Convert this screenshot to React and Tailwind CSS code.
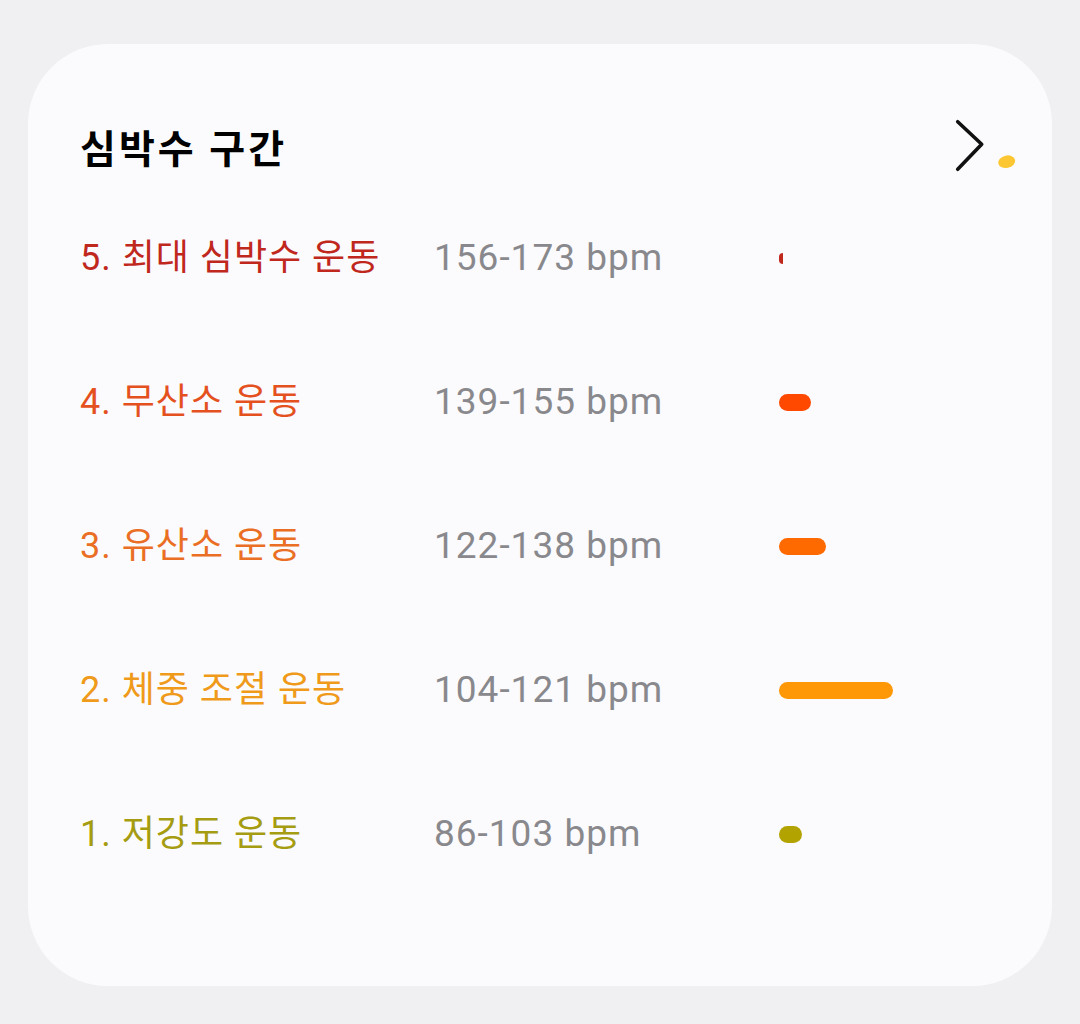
import React from 'react';

const zones = [
  { label: '5. 최대 심박수 운동', range: '156-173 bpm', color: 'text-[#c0281d]', bar: 'bg-[#c0281d]', w: 'w-[4px] h-[11px] rounded-l-full' },
  { label: '4. 무산소 운동', range: '139-155 bpm', color: 'text-[#e4511f]', bar: 'bg-[#ff4800]', w: 'w-[32px] h-[17px] rounded-full' },
  { label: '3. 유산소 운동', range: '122-138 bpm', color: 'text-[#ea6f24]', bar: 'bg-[#ff6a00]', w: 'w-[47px] h-[17px] rounded-full' },
  { label: '2. 체중 조절 운동', range: '104-121 bpm', color: 'text-[#ef9a1a]', bar: 'bg-[#ff9806]', w: 'w-[114px] h-[17px] rounded-full' },
  { label: '1. 저강도 운동', range: '86-103 bpm', color: 'text-[#a59c12]', bar: 'bg-[#b3a300]', w: 'w-[23px] h-[17px] rounded-full' },
];

export default function App() {
  return (
    <div
      className="min-h-[1024px] w-[1080px] bg-[#f0f0f2] pt-[44px] px-[28px]"
      style={{ fontFamily: 'Roboto, "Noto Sans CJK KR", sans-serif' }}
    >
      <div className="w-[1024px] h-[942px] bg-[#fbfbfd] rounded-[80px] pl-[52px] pr-[34px]">
        {/* header */}
        <div className="h-[142px] flex items-end justify-between pb-[12px]">
          <h1 className="text-[39px] leading-[48px] font-bold text-black tracking-[3px]">심박수 구간</h1>
          <svg width="66" height="58" viewBox="0 0 66 58">
            <polyline
              points="5.7,5.7 29.7,28.3 5.7,53.3"
              fill="none"
              stroke="#111"
              strokeWidth="3.6"
              strokeLinecap="round"
              strokeLinejoin="round"
            />
            <ellipse cx="54.7" cy="45.7" rx="8.6" ry="6.2" transform="rotate(-12 54.7 45.7)" fill="#fcc733" />
          </svg>
        </div>

        {/* zones */}
        {zones.map((z) => (
          <div key={z.label} className="h-[144px] flex items-center">
            <div className={`w-[354px] text-[36px] leading-[44px] tracking-[1px] ${z.color}`}>{z.label}</div>
            <div className="w-[345px] text-[37px] leading-[44px] tracking-[1px] text-[#89898d]">{z.range}</div>
            <div className={`${z.w} ${z.bar}`} />
          </div>
        ))}
      </div>
    </div>
  );
}
